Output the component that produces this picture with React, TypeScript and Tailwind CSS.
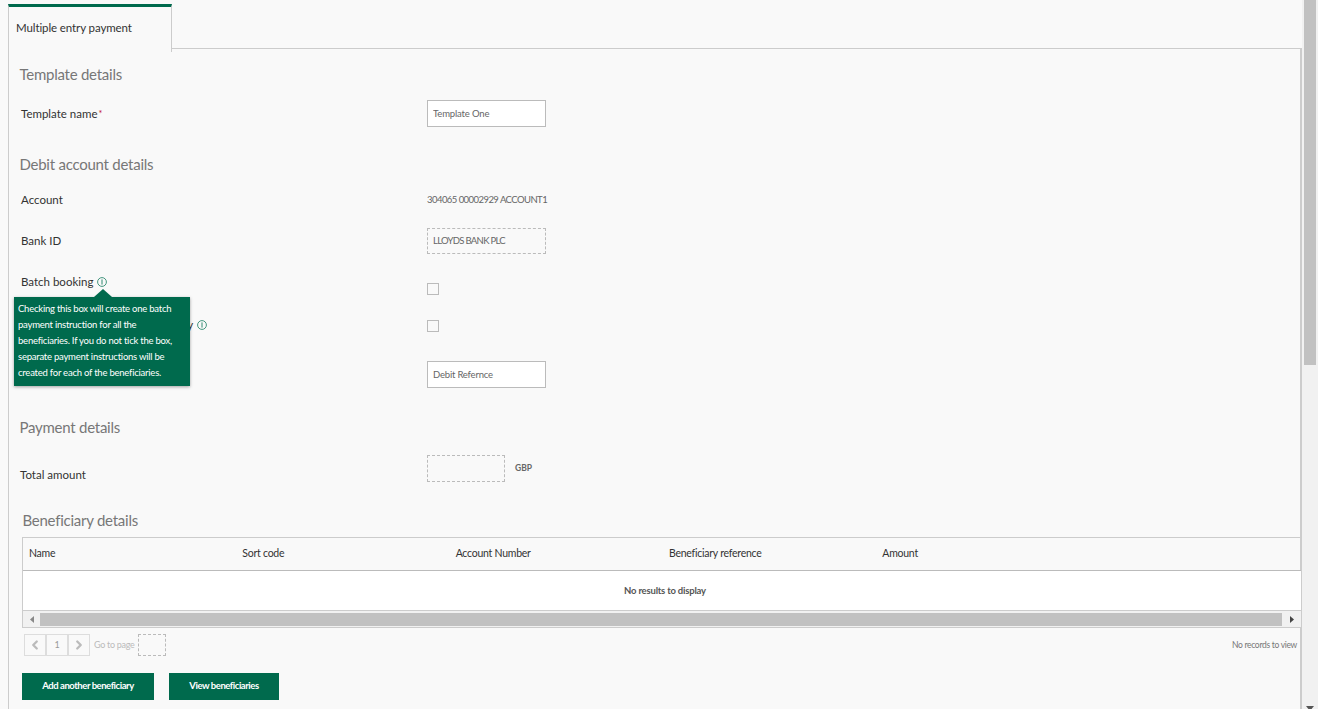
import React from 'react';
import { ChevronLeft, ChevronRight } from 'lucide-react';

function InfoIcon() {
  return (
    <svg width="10" height="10" viewBox="0 0 10 10" fill="none" className="shrink-0">
      <circle cx="5" cy="5" r="4.4" stroke="#2f8a70" strokeWidth="0.9" />
      <path d="M5 2.4V7.6" stroke="#2f8a70" strokeWidth="1" />
    </svg>
  );
}

function Heading({ children, className }: { children: React.ReactNode; className: string }) {
  return <h2 className={`h-[26px] -ml-[0.5px] flex items-center text-[15px] leading-none tracking-[-0.25px] text-[#777777] font-normal ${className}`}>{children}</h2>;
}

function Label({ children, className = '' }: { children: React.ReactNode; className?: string }) {
  return <div className={`w-[406px] shrink-0 flex items-center text-[11.5px] text-[#333333] ${className}`}>{children}</div>;
}

const columns = ['Name', 'Sort code', 'Account Number', 'Beneficiary reference', 'Amount', ''];

export default function App() {
  return (
    <div className="h-[709px] flex overflow-hidden bg-[#f9f9f9] font-['Lato','Liberation_Sans',sans-serif]">
      <main className="flex-1 min-w-0 pl-2">
        <div className="relative z-10 w-[164px] h-[48px] mt-1 -mb-1 bg-[#f9f9f9] border-t-[3px] border-t-[#006a4d] border-r border-r-[#cccccc] border-l border-l-[#cccccc] pl-[7px] pt-[13px] text-[11.5px] leading-[16px] tracking-[-0.1px] text-[#333333]">
          Multiple entry payment
        </div>

        <div className="relative h-[661px] border-t border-l border-r-2 border-[#cccccc] pl-[11px] flex flex-col">
          <Heading className="mt-[12px]">Template details</Heading>
          <div className="flex h-[27px] mt-[13px] pl-px">
            <Label>
              Template name<span className="text-[#c0102c] text-[9px] ml-px">*</span>
            </Label>
            <input readOnly value="Template One" className="w-[119px] h-[27px] bg-white border border-[#bbbbbb] px-[5px] text-[9.5px] tracking-[-0.15px] text-[#666666] outline-none" />
          </div>

          <Heading className="mt-[24px]">Debit account details</Heading>
          <div className="flex h-[26px] mt-[10px] pl-px">
            <Label>Account</Label>
            <div className="flex items-center text-[9.5px] tracking-[-0.55px] text-[#666666] whitespace-nowrap">304065 00002929 ACCOUNT1</div>
          </div>
          <div className="flex h-[26px] mt-[15px] pl-px">
            <Label>Bank ID</Label>
            <div className="w-[119px] border border-dashed border-[#bbbbbb] px-[5px] flex items-center text-[9.5px] tracking-[-0.7px] text-[#666666]">LLOYDS BANK PLC</div>
          </div>
          <div className="flex h-[26px] mt-[15px] pl-px">
            <Label className="gap-[4px]">
              Batch booking <InfoIcon />
            </Label>
            <div className="w-3 h-3 mt-[14px] bg-[#f9f9f9] border border-[#bbbbbb]" />
          </div>
          <div className="flex h-[26px] mt-[17px] pl-px">
            <Label className="gap-[4px] tracking-[0.25px]">
              Request a single debit entry only <InfoIcon />
            </Label>
            <div className="w-3 h-3 mt-2 bg-[#f9f9f9] border border-[#bbbbbb]" />
          </div>
          <div className="flex h-[27px] mt-[23px] pl-px">
            <Label>{''}</Label>
            <input readOnly value="Debit Refernce" className="w-[119px] h-[27px] bg-white border border-[#bbbbbb] px-[5px] text-[9.5px] tracking-[-0.2px] text-[#666666] outline-none" />
          </div>

          <Heading className="mt-[26px]">Payment details</Heading>
          <div className="flex h-[27px] mt-[15px]">
            <Label className="w-[407px] items-end -mb-px">Total amount</Label>
            <div className="w-[78px] border border-dashed border-[#bbbbbb]" />
            <div className="ml-[10px] mt-[7px] text-[8.5px] font-bold text-[#666666]">GBP</div>
          </div>

          <Heading className="mt-[25px] pl-[3px]">Beneficiary details</Heading>

          <div className="-mr-px ml-[2px] mt-[4px]">
            <div className="border-t border-l border-[#cccccc]">
              <div className="grid grid-cols-[repeat(6,213.33px)] h-[33px] items-center border-b border-[#bbbbbb] text-[10.5px] tracking-[-0.25px] text-[#333333]">
                {columns.map((c, i) => (
                  <div key={i} className="pl-[6px] truncate">{c}</div>
                ))}
              </div>
              <div className="h-[39px] bg-white flex items-center justify-center pl-[6px] pt-px text-[9.5px] tracking-[-0.2px] font-bold text-[#555555]">
                No results to display
              </div>
              <div className="h-[18px] border-t border-b border-[#cccccc] bg-[#f1f1f1] flex items-center">
                <div className="w-[17px] flex justify-center">
                  <svg width="4" height="7" viewBox="0 0 4 7"><path d="M4 0V7L0 3.5Z" fill="#888888" /></svg>
                </div>
                <div className="flex-1 h-[13px] bg-[#c1c1c1]" />
                <div className="w-[19px] flex justify-center">
                  <svg width="4" height="7" viewBox="0 0 4 7"><path d="M0 0V7L4 3.5Z" fill="#444444" /></svg>
                </div>
              </div>
            </div>

            <div className="flex items-center h-[22px] mt-[6px] pl-[2px] pr-[4px]">
              <div className="w-[22px] h-[22px] border border-[#dddddd] flex items-center justify-center text-[#bbbbbb]">
                <ChevronLeft size={14} strokeWidth={4} />
              </div>
              <div className="w-[22px] h-[22px] border border-[#dddddd] flex items-center justify-center text-[9px] text-[#999999]">1</div>
              <div className="w-[22px] h-[22px] border border-[#dddddd] flex items-center justify-center text-[#bbbbbb]">
                <ChevronRight size={14} strokeWidth={4} />
              </div>
              <span className="ml-[4px] text-[9px] tracking-[-0.3px] text-[#bbbbbb]">Go to page</span>
              <div className="ml-[4px] w-[28px] h-[22px] border border-dashed border-[#bbbbbb]" />
              <span className="ml-auto text-[8.5px] tracking-[-0.3px] text-[#777777]">No records to view</span>
            </div>

            <div className="flex gap-[15px] mt-[17px]">
              <button className="w-[132px] h-[27px] bg-[#006a4d] text-white text-[9.5px] tracking-[-0.45px] font-bold">Add another beneficiary</button>
              <button className="w-[110px] h-[27px] bg-[#006a4d] text-white text-[9.5px] tracking-[-0.45px] font-bold">View beneficiaries</button>
            </div>
          </div>

          <div className="absolute left-[5px] top-[248px] w-[176px] h-[89px] z-20 bg-[#006a4d] shadow-[0_1px_3px_rgba(0,0,0,0.35)] px-[4px] py-[4px] text-[9.5px] leading-[16px] tracking-[-0.23px] text-white">
            <div className="absolute -top-[8px] left-[80px] w-0 h-0 border-l-[9px] border-r-[9px] border-b-[8px] border-l-transparent border-r-transparent border-b-[#006a4d]" />
            Checking this box will create one batch payment instruction for all the beneficiaries. If you do not tick the box, separate payment instructions will be created for each of the beneficiaries.
          </div>
        </div>
      </main>

      <div className="w-[16px] shrink-0 bg-[#f1f1f1] flex flex-col items-center">
        <div className="w-3 h-[365px] bg-[#c1c1c1]" />
        <svg width="8" height="5" viewBox="0 0 8 5" className="mt-auto -mb-[2px] shrink-0"><path d="M0 0H8L4 5Z" fill="#555555" /></svg>
      </div>
    </div>
  );
}
